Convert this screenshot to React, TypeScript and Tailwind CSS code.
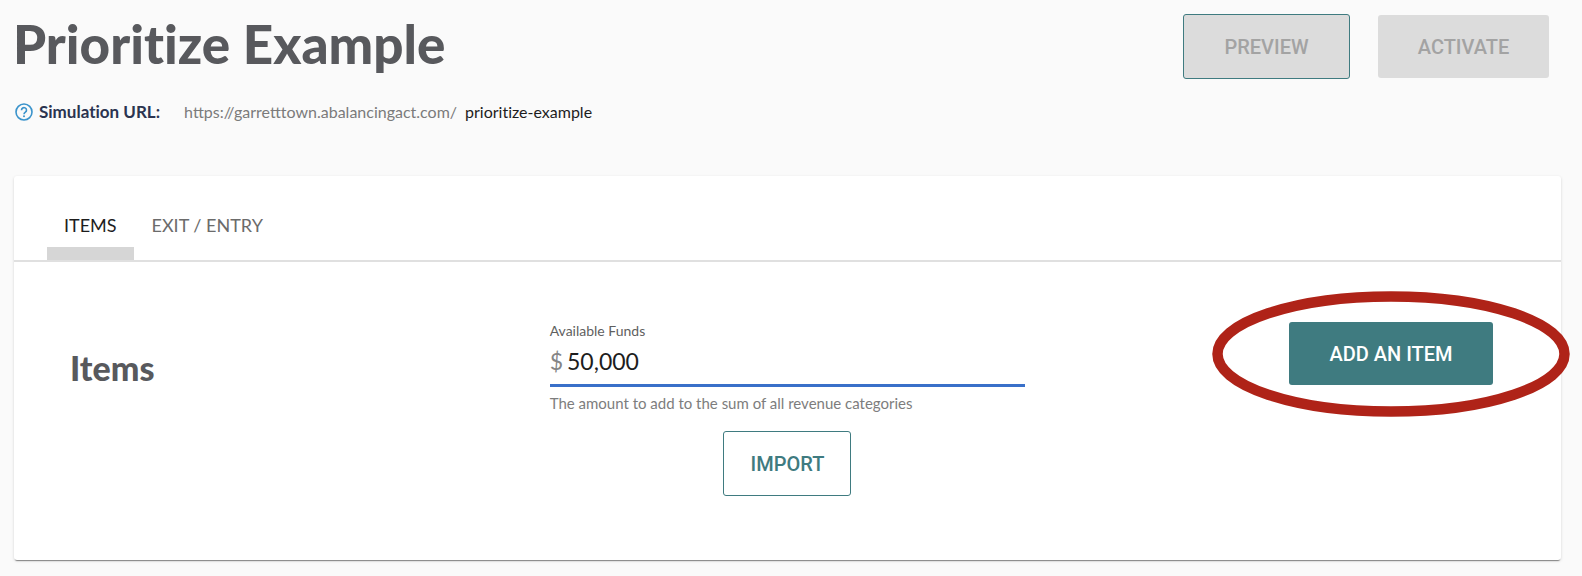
import { useState } from "react";

const buttonBase =
  "flex items-center justify-center rounded-[3px] font-['Roboto',sans-serif] text-[20px] font-medium leading-6";

function HelpIcon() {
  return (
    <svg viewBox="0 0 18 18" className="size-[18px] shrink-0" fill="none" stroke="#3a93cb" aria-hidden="true">
      <circle cx="9" cy="9" r="8" strokeWidth="1.6" />
      <path d="M6.5 7.200a2.500 2.500 0 1 1 3.900 2C9.500 9.800 9 10.200 9 11.200" strokeWidth="1.600" />
      <circle cx="9" cy="13.300" r="1" fill="#3a93cb" stroke="none" />
    </svg>
  );
}

function Header() {
  const [slug, setSlug] = useState("prioritize-example");
  return (
    <header className="px-[15px]">
      <div className="flex items-start justify-between pt-[14px] pr-[18px]">
        <h1 className="-ml-0.5 text-[53px] font-black leading-[60px] text-[#58595d] [font-variant-ligatures:none]">
          Prioritize Example
        </h1>
        <div className="flex items-center gap-7">
          <button disabled className={`${buttonBase} h-[65px] w-[167px] border border-[#3f7b80] bg-[#dcdcdc] text-[#a3a3a3]`}>
            PREVIEW
          </button>
          <button disabled className={`${buttonBase} h-[63px] w-[171px] bg-[#dcdcdc] text-[#a3a3a3]`}>
            ACTIVATE
          </button>
        </div>
      </div>
      <div className="flex items-center pt-[21px] text-[16px] leading-6">
        <HelpIcon />
        <label htmlFor="slug" className="ml-1.5 text-[17px] font-bold text-[#2b3450] [font-variant-ligatures:none]">
          Simulation URL:
        </label>
        <span className="ml-6 text-[#7b7b7b]">https://garretttown.abalancingact.com/</span>
        <input
          id="slug"
          value={slug}
          onChange={(e) => setSlug(e.target.value)}
          className="ml-2 w-60 bg-transparent text-[#1d1d1d] outline-none [font-variant-ligatures:none]"
        />
      </div>
    </header>
  );
}

function Tabs() {
  return (
    <nav role="tablist" className="flex h-[86px] items-end border-b-2 border-[#e0e0e0] pl-[33px] text-[18px] leading-6">
      <button role="tab" aria-selected="true" className="flex flex-col items-center">
        <span className="px-[17px] pb-[10px] text-[#1d1d1d]">ITEMS</span>
        <span className="h-[13px] w-full bg-[#d6d6d6]" />
      </button>
      <button role="tab" aria-selected="false" className="px-[18px] pb-[23px] text-[#6b6b6b]">
        EXIT / ENTRY
      </button>
    </nav>
  );
}

function ItemsPanel() {
  const [funds, setFunds] = useState("50,000");
  return (
    <section className="grid grid-cols-3 gap-x-1 px-14 pt-[60px] pb-16">
      <h2 className="pt-[26px] text-[34px] font-black leading-10 text-[#58595d]">Items</h2>
      <div className="flex flex-col">
        <label htmlFor="funds" className="text-[14px] leading-[18px] text-[#5f5f5f]">
          Available Funds
        </label>
        <div className="flex h-[47px] items-start gap-1 border-b-[3px] border-[#3970c9] pt-[7px] text-[23px] leading-7">
          <span className="text-[#858585]">$</span>
          <input
            id="funds"
            value={funds}
            onChange={(e) => setFunds(e.target.value)}
            className="min-w-0 flex-1 bg-transparent text-[#1d1d1d] outline-none"
          />
        </div>
        <p className="pt-1 text-[15px] leading-6 text-[#7d7d7d]">The amount to add to the sum of all revenue categories</p>
        <button className={`${buttonBase} mt-4 h-[65px] w-[128px] self-center border border-[#3f7b80] text-[#3f7b80]`}>
          IMPORT
        </button>
      </div>
      <div className="flex items-start justify-end pr-3">
        <div className="relative">
          <button className={`${buttonBase} h-[63px] w-[204px] bg-[#3f7b80] text-white`}>ADD AN ITEM</button>
          <svg
            viewBox="0 0 358 126"
            className="pointer-events-none absolute top-1/2 left-1/2 h-[126px] w-[358px] -translate-x-1/2 -translate-y-1/2"
            fill="none"
            stroke="#af2318"
            strokeWidth="10.5"
            aria-hidden="true"
          >
            <ellipse cx="179" cy="63" rx="173.500" ry="57.500" />
          </svg>
        </div>
      </div>
    </section>
  );
}

export default function App() {
  return (
    <div className="min-h-screen bg-[#fafafa] pb-4 font-['Lato',sans-serif]">
      <Header />
      <main className="mx-[14px] mr-[21px] mt-[52px] rounded-[3px] bg-white shadow-[0_2px_1px_-1px_rgba(0,0,0,0.4),0_1px_3px_rgba(0,0,0,0.16)]">
        <Tabs />
        <ItemsPanel />
      </main>
    </div>
  );
}
